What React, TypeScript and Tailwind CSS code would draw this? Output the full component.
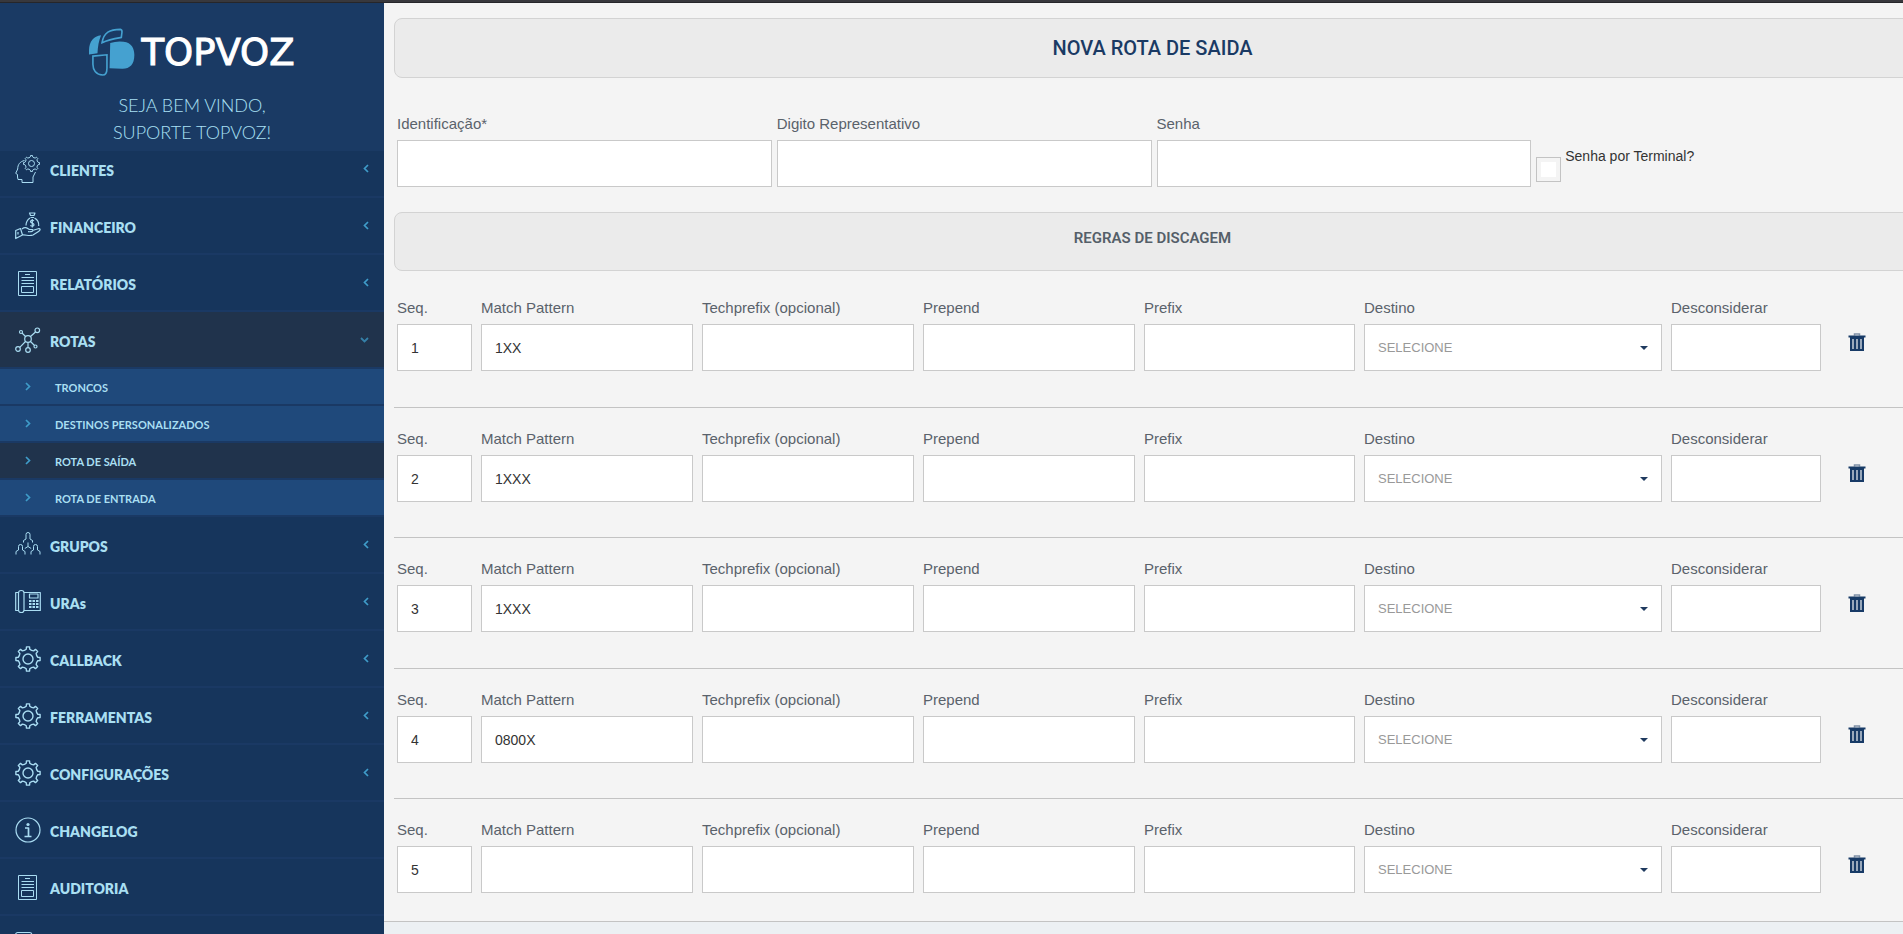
import { useId, type ReactNode } from 'react';

function gear(cx: number, cy: number, outer: number, inner: number): string {
  const teeth = 8;
  const step = (Math.PI * 2) / teeth;
  const at = (r: number, a: number) =>
    `${(cx + r * Math.sin(a)).toFixed(2)} ${(cy - r * Math.cos(a)).toFixed(2)}`;
  let d = '';
  for (let i = 0; i < teeth; i++) {
    const a = i * step;
    d += `${i === 0 ? 'M' : 'L'}${at(outer, a - step * 0.16)}L${at(outer, a + step * 0.16)}`;
    d += `L${at(inner + 0.4, a + step * 0.23)}Q${at(inner - 0.5, a + step * 0.5)} ${at(inner + 0.4, a + step * 0.77)}`;
  }
  return d + 'Z';
}

function Icon({ children, width = 1.2 }: { children: ReactNode; width?: number }) {
  return (
    <svg
      viewBox="0 0 26 28"
      className="h-7 w-[26px] shrink-0"
      fill="none"
      stroke="#a9dcf2"
      strokeWidth={width}
      strokeLinejoin="round"
      aria-hidden="true"
    >
      {children}
    </svg>
  );
}

const HeadIcon = () => (
  <Icon width={1}>
    <path d="M9.500 5.500C5 6.500 2.700 9.500 2.700 14L.7 18.300 2.500 19.500V22L3 24.500H7V27.500H18V22L20.500 17" />
    <path d={gear(16.5, 8.5, 8, 6.3)} />
    <circle cx="16.500" cy="8.500" r="3" />
  </Icon>
);

const MoneyIcon = () => (
  <Icon>
    <path d="M14.500 1H20L19 3.500H15.500ZM15.500 5.500H19M15 6C12 8 11 10.500 11 13.500M19.500 6C23 8 24 11 23.700 14" />
    <path d="M19 8.800C17.500 7.800 15.500 8.200 15.500 9.700S19 11 19 12.700 17 14.400 15.300 13.500M17.300 7V15.500" />
    <path d="M.700 18.500 5.500 16.500 7.500 23 .700 26.500ZM7 17C10 14.500 12 16 14.500 17.500H17.500C18.500 19 17.500 20 13 19.700M17.500 18.500 24 16.500C26 17 25 18.500 23.500 19.500L18 23C14 24.500 11 22.500 7.500 23M3 20V22.500" />
  </Icon>
);

const DocumentIcon = () => (
  <Icon width={1}>
    <path d="M3.500 2.500H21.500V26.500H3.500ZM10 5.500H15" />
    <path d="M6.500 8.500H19M6.500 11.500H19M6.500 14.500H19M6.500 17.500H18.500V23.500H6.500Z" />
  </Icon>
);

const NetworkIcon = () => (
  <Icon>
    <circle cx="13" cy="13" r="3.300" />
    <circle cx="22.300" cy="4.300" r="2.300" />
    <circle cx="6" cy="6" r="1.500" />
    <circle cx="3" cy="23" r="2.300" />
    <circle cx="13" cy="24" r="2.300" />
    <circle cx="20.500" cy="20.500" r="1.500" />
    <path d="M15.500 10.500 20.500 6M7 7 10.500 10.500M10.500 15.500 4.800 21.300M13 16.500V21.500M15.500 15.500 19.500 19.500" />
  </Icon>
);

const GroupIcon = () => (
  <Icon width={1}>
    <path d="M8.500 11.500V9.500L11 8V3.500Q11 1.500 13 1.500T15 3.500V8L17.500 9.500V11.500" />
    <path d="M1 23.500V20.500L3.500 19V15.500Q3.500 13.500 5.500 13.500T7.500 15.500V19L10 20.500V23.500" />
    <path d="M16 23.500V20.500L18.500 19V15.500Q18.500 13.500 20.500 13.500T22.500 15.500V19L25 20.500V23.500" />
    <path d="M13 11.500V15.500L9.800 17.500M13 15.500 16.200 17.500" />
  </Icon>
);

const PhoneIcon = () => (
  <Icon>
    <path d="M3.500 4.500H.700V22.500H3.500M9 4.500H25.300V22.500H9" />
    <rect x="3.500" y="2.500" width="5.500" height="22" rx="2.500" />
    <rect x="14.500" y="6" width="8.500" height="4" />
    <path d="M14 13H23.500M14 16H23.500M14 19H23.500" strokeDasharray="2.500 1" strokeWidth="2" />
  </Icon>
);

const GearIcon = () => (
  <Icon width={1.4}>
    <path d={gear(13, 14, 12.2, 9.5)} />
    <circle cx="13" cy="14" r="5" />
  </Icon>
);

const InfoIcon = () => (
  <Icon>
    <circle cx="13" cy="14" r="12" />
    <circle cx="13" cy="8.500" r="1.600" fill="#a9dcf2" stroke="none" />
    <path d="M10 12H13.500V20.500M9.500 20.500H16.500" strokeWidth="1.700" />
  </Icon>
);

const BoxIcon = () => (
  <Icon>
    <rect x=".7" y="2.500" width="16" height="22" rx="2" />
  </Icon>
);

const ChevronLeft = () => (
  <svg viewBox="0 0 6 9" className="h-[9px] w-1.5" fill="none" stroke="#3f9cc9" strokeWidth="1.700" aria-hidden="true">
    <path d="M5 1 1.500 4.500 5 8" />
  </svg>
);

const ChevronRight = () => (
  <svg viewBox="0 0 6 9" className="h-[9px] w-1.5" fill="none" stroke="#3f9cc9" strokeWidth="1.700" aria-hidden="true">
    <path d="M1 1 4.500 4.500 1 8" />
  </svg>
);

const ChevronDown = () => (
  <svg viewBox="0 0 9 6" className="h-1.5 w-[9px]" fill="none" stroke="#3580a8" strokeWidth="1.800" aria-hidden="true">
    <path d="M1 1 4.500 4.500 8 1" />
  </svg>
);

const TrashIcon = () => (
  <svg viewBox="0 0 18 20" className="h-5 w-[18px]" aria-hidden="true">
    <path d="M6.500 3.500V2H11.500V3.500" fill="none" stroke="#7f90a6" strokeWidth="1.500" />
    <path d="M.5 3.500H17.500V5.500H.5ZM2 5H16V19H2Z" fill="#173a66" />
    <path d="M5 7V17M9 7V17M13 7V17" stroke="#dfe4ea" strokeWidth="1.300" />
  </svg>
);

type Item = {
  label: string;
  icon: () => ReactNode;
  arrow?: 'left' | 'down';
  children?: { label: string; active?: boolean }[];
};

const menu: Item[] = [
  { label: 'CLIENTES', icon: HeadIcon, arrow: 'left' },
  { label: 'FINANCEIRO', icon: MoneyIcon, arrow: 'left' },
  { label: 'RELATÓRIOS', icon: DocumentIcon, arrow: 'left' },
  {
    label: 'ROTAS',
    icon: NetworkIcon,
    arrow: 'down',
    children: [
      { label: 'TRONCOS' },
      { label: 'DESTINOS PERSONALIZADOS' },
      { label: 'ROTA DE SAÍDA', active: true },
      { label: 'ROTA DE ENTRADA' },
    ],
  },
  { label: 'GRUPOS', icon: GroupIcon, arrow: 'left' },
  { label: 'URAs', icon: PhoneIcon, arrow: 'left' },
  { label: 'CALLBACK', icon: GearIcon, arrow: 'left' },
  { label: 'FERRAMENTAS', icon: GearIcon, arrow: 'left' },
  { label: 'CONFIGURAÇÕES', icon: GearIcon, arrow: 'left' },
  { label: 'CHANGELOG', icon: InfoIcon },
  { label: 'AUDITORIA', icon: DocumentIcon },
  { label: '', icon: BoxIcon },
];

function MenuItem({ item }: { item: Item }) {
  const open = item.arrow === 'down';
  return (
    <li>
      <a
        href="#"
        aria-label={item.label || 'Menu'}
        className={`flex h-[57px] items-center border-b-2 border-[#1a3964] px-[15px] text-sm font-extrabold text-[#a9dff2] ${open ? 'bg-[#20334c]' : 'bg-[#16355c]'}`}
      >
        <item.icon />
        <span className="ml-[9px] flex-1 pt-1">{item.label}</span>
        {item.arrow === 'left' && <ChevronLeft />}
        {open && <ChevronDown />}
      </a>
      {item.children && (
        <ul>
          {item.children.map((child) => (
            <li key={child.label}>
              <a
                href="#"
                className={`flex h-[37px] items-center border-b-2 border-[#1a3964] pl-[25px] text-[11px] font-bold text-[#a9dff2] ${child.active ? 'bg-[#20334c]' : 'bg-[#1f497b]'}`}
              >
                <ChevronRight />
                <span className="ml-6 pt-1">{child.label}</span>
              </a>
            </li>
          ))}
        </ul>
      )}
    </li>
  );
}

function Logo() {
  return (
    <div className="flex h-12 items-center gap-1.5">
      <svg viewBox="54 37 141 147" className="h-12 w-[46px]" aria-hidden="true">
        <path d="M54 118V104C55 78 68 62 91 59C84 75 81 95 80 114Z" fill="#45a1d0" />
        <path d="M119 83Q140 76 160 79C185 82 193 100 193 120C193 150 178 163 155 162L117 160Z" fill="#45a1d0" />
        <path
          d="M94 82C99 50 118 41 150 41Q156 42 155 50L153 66C135 69 115 72 94 82ZM66 123 109 119V160C109 174 104 181 96 181C76 180 66 166 66 148Z"
          fill="none"
          stroke="#45a1d0"
          strokeWidth="5"
        />
      </svg>
      <span className="font-['DejaVu_Sans',sans-serif] text-[37px] leading-none text-white [-webkit-text-stroke:1px_white]">
        TOPVOZ
      </span>
    </div>
  );
}

function Sidebar() {
  return (
    <aside className="flex w-96 shrink-0 flex-col bg-[#1a3a64] font-[Lato,sans-serif]">
      <header className="flex h-[148px] shrink-0 flex-col items-center pt-[25px]">
        <Logo />
        <p className="mt-4 text-center text-lg leading-[27px] font-light text-[#a9e0f5]">
          SEJA BEM VINDO,
          <br />
          SUPORTE TOPVOZ!
        </p>
      </header>
      <nav className="min-h-0 flex-1 overflow-hidden">
        <ul className="-mt-2.5">
          {menu.map((item) => (
            <MenuItem key={item.label} item={item} />
          ))}
        </ul>
      </nav>
    </aside>
  );
}

function Field({ label, value = '' }: { label: string; value?: string }) {
  const id = useId();
  return (
    <div className="min-w-0">
      <label htmlFor={id} className="block h-[27px] text-[15px] leading-[22px] text-[#5a626b]">
        {label}
      </label>
      <input
        id={id}
        type="text"
        defaultValue={value}
        className="h-[47px] w-full border border-[#c9c9c9] bg-white px-[13px] text-sm text-[#333] outline-none"
      />
    </div>
  );
}

function Destination() {
  const id = useId();
  return (
    <div className="min-w-0">
      <label htmlFor={id} className="block h-[27px] text-[15px] leading-[22px] text-[#5a626b]">
        Destino
      </label>
      <div className="relative">
        <select
          id={id}
          className="h-[47px] w-full appearance-none border border-[#c9c9c9] bg-white px-[13px] text-[13px] text-[#999] outline-none"
        >
          <option>SELECIONE</option>
        </select>
        <svg
          viewBox="0 0 8 4"
          className="pointer-events-none absolute top-[22px] right-[14px] h-1 w-2"
          fill="#1f3a5f"
          aria-hidden="true"
        >
          <path d="M0 0H8L4 4Z" />
        </svg>
      </div>
    </div>
  );
}

function Rule({ seq, pattern }: { seq: string; pattern: string }) {
  return (
    <div className="grid grid-cols-[75fr_212fr_212fr_212fr_211fr_298fr_150fr_81fr] gap-x-[9px] pt-5 pl-[3px] not-last:border-b not-last:border-[#c3c3c3] not-last:odd:h-[131px] not-last:even:h-[130px] last:h-[122px]">
      <Field label="Seq." value={seq} />
      <Field label="Match Pattern" value={pattern} />
      <Field label="Techprefix (opcional)" />
      <Field label="Prepend" />
      <Field label="Prefix" />
      <Destination />
      <Field label="Desconsiderar" />
      <div className="pt-[35px] pl-[18px]">
        <button type="button" aria-label="Excluir" className="block">
          <TrashIcon />
        </button>
      </div>
    </div>
  );
}

const rules = ['1XX', '1XXX', '1XXX', '0800X', ''];

export default function App() {
  return (
    <div className="flex h-screen flex-col overflow-hidden bg-[#ecf0f3] font-['Liberation_Sans',Arial,sans-serif]">
      <div className="h-[3px] shrink-0 border-b border-[#26262a] bg-[#38383d]" />
      <div className="flex min-h-0 flex-1">
        <Sidebar />
        <main className="min-w-0 flex-1 overflow-hidden">
          <form className="border-b border-[#c3c3c3] bg-[#f4f4f4] pt-[15px] pl-2.5">
            <div className="-mr-2">
              <h1 className="flex h-[60px] items-center justify-center rounded-lg border border-[#d3d3d3] bg-[#ebebeb] font-[Roboto,sans-serif] text-xl font-medium text-[#1a3a64]">
                NOVA ROTA DE SAIDA
              </h1>
              <div className="mt-[35px] grid grid-cols-4 gap-x-[5px] pl-[3px]">
                <Field label="Identificação*" />
                <Field label="Digito Representativo" />
                <Field label="Senha" />
                <label className="flex gap-1 pt-[33px] text-sm leading-5 text-[#333]">
                  <input
                    type="checkbox"
                    className="mt-[11px] size-[25px] appearance-none border border-[#c3c3c3] bg-white shadow-[inset_0_0_0_4px_#f4f4f4]"
                  />
                  Senha por Terminal?
                </label>
              </div>
              <h2 className="mt-[25px] flex h-[59px] justify-center rounded-lg border border-[#d3d3d3] bg-[#ebebeb] pt-[13px] font-[Roboto,sans-serif] text-[15px] leading-6 font-semibold text-[#555f69]">
                REGRAS DE DISCAGEM
              </h2>
              <div className="pt-1.5">
                {rules.map((pattern, i) => (
                  <Rule key={i} seq={String(i + 1)} pattern={pattern} />
                ))}
              </div>
            </div>
          </form>
        </main>
      </div>
    </div>
  );
}
